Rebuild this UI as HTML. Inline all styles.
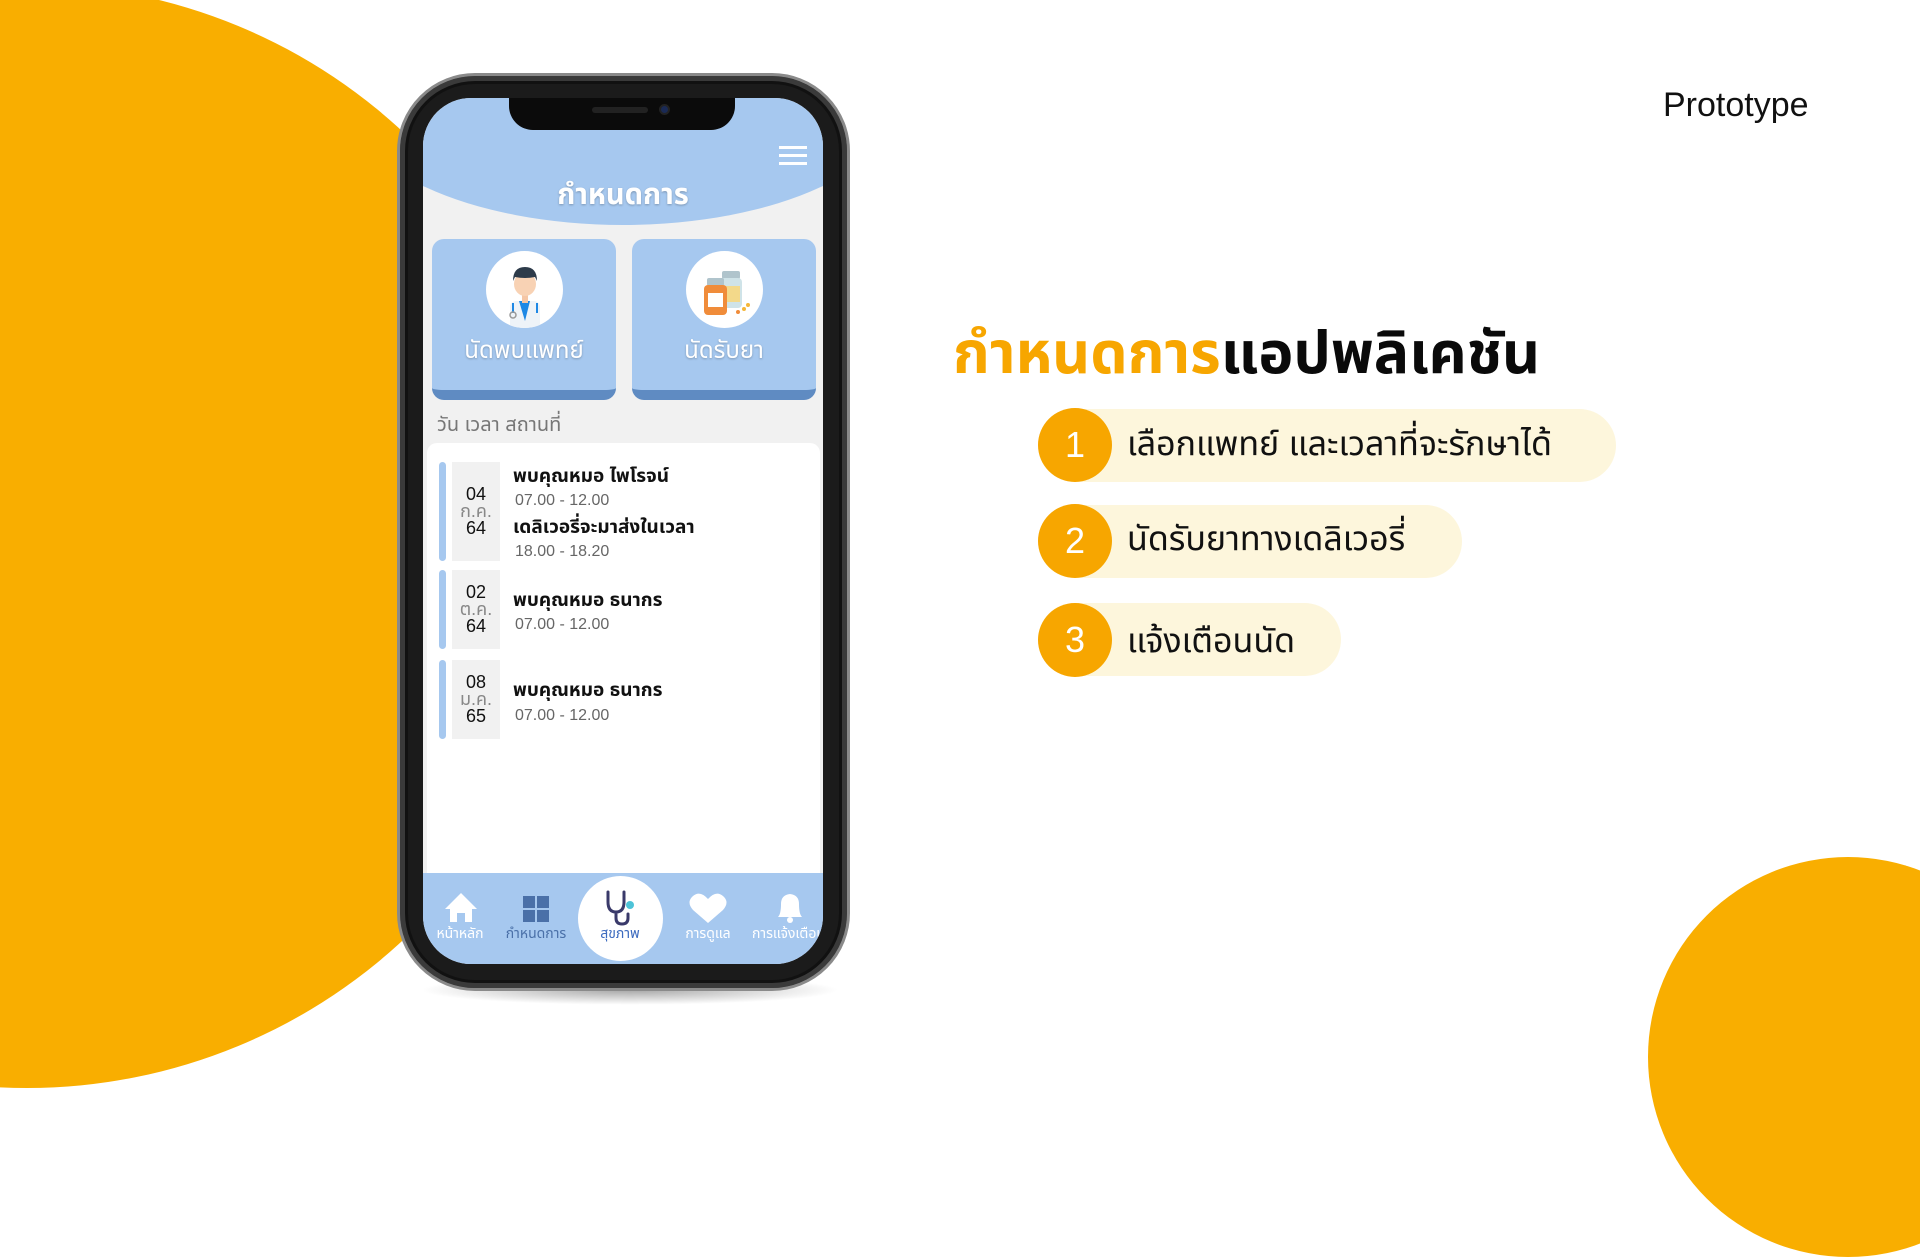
<!DOCTYPE html>
<html><head><meta charset="utf-8"><style>
*{margin:0;padding:0;box-sizing:border-box}
body{width:1920px;height:1080px;overflow:hidden;background:#fff;position:relative;font-family:"Liberation Sans","Noto Sans Thai","Loma","Garuda","Waree","Noto Sans CJK SC",sans-serif}
.a{position:absolute}
.c1{left:-525px;top:-16px;width:1104px;height:1104px;border-radius:50%;background:#f9ae00}
.c2{left:1648px;top:857px;width:400px;height:400px;border-radius:50%;background:#f9ae00}
.shadow{left:420px;top:975px;width:420px;height:30px;border-radius:50%;background:radial-gradient(ellipse at center,rgba(0,0,0,.35),rgba(0,0,0,0) 70%)}
.frame{left:397px;top:73px;width:453px;height:918px;border-radius:78px;background:#1b1b1b;border:3px solid #8a8a8a;box-shadow:inset 0 0 0 5px #3a3a3a,inset 0 0 0 8px #111}
.screen{left:423px;top:98px;width:400px;height:866px;border-radius:48px;overflow:hidden;background:#f1f1f1}
.notch{left:86px;top:0;width:226px;height:32px;background:#0b0b0b;border-radius:0 0 24px 24px}
.hdr{left:-80px;top:-300px;width:560px;height:427px;border-radius:0 0 50% 50%/0 0 130px 130px;background:#a6c8ef}
.ttl{left:0;width:400px;top:76px;text-align:center;color:#fff;font-size:29px;font-weight:bold;text-shadow:0 1px 2px rgba(0,0,0,.25)}
.ham{left:356px;top:48px;width:28px;height:3px;background:#fff;box-shadow:0 8px 0 #fff,0 16px 0 #fff}
.card{width:184px;height:161px;border-radius:12px;background:#a6c8ef;border-bottom:10px solid #5f8bc2;top:141px}
.icn{width:77px;height:77px;border-radius:50%;background:#fff;left:54px;top:12px;overflow:hidden}
.lbl{width:184px;text-align:center;top:94px;left:0;color:#fff;font-size:24px;text-shadow:0 1px 2px rgba(0,0,0,.25)}
.sub{left:14px;top:312px;color:#777;font-size:20px}
.list{left:4px;top:345px;width:393px;height:440px;background:#fff;border-radius:10px 10px 0 0}
.bar{width:7px;border-radius:4px;background:#a6c8ef;left:12px}
.date{width:48px;background:#f1f1f1;left:25px;text-align:center;font-size:18px;line-height:17px;color:#111;display:flex;flex-direction:column;justify-content:center}
.date i{font-style:normal;color:#888}
.nm{left:86px;font-size:19px;font-weight:bold;color:#111;white-space:nowrap}
.tm{left:88px;font-size:16px;color:#666}
.nav{left:0;top:775px;width:400px;height:91px;background:#a6c8ef}
.nl{font-size:14px;color:#fff;width:80px;text-align:center;top:51px;white-space:nowrap}
.pill{background:#fdf6dc;height:73px;border-radius:37px;left:1038px}
.num{width:74px;height:74px;border-radius:50%;background:#f7a600;color:#fff;font-size:36px;text-align:center;line-height:74px;left:1038px}
.pt{left:1127px;font-size:34px;color:#111;white-space:nowrap}
</style></head><body>
<div class="a c1"></div>
<div class="a c2"></div>
<div class="a" style="left:1663px;top:86px;font-size:34px;color:#111">Prototype</div>
<div class="a" style="left:953px;top:310px;font-size:59px;font-weight:bold;white-space:nowrap;color:#0a0a0a"><span style="color:#f7a600">กำหนดการ</span>แอปพลิเคชัน</div>
<div class="a pill" style="top:409px;width:578px"></div>
<div class="a num" style="top:408px">1</div>
<div class="a pt" style="top:420px">เลือกแพทย์ และเวลาที่จะรักษาได้</div>
<div class="a pill" style="top:505px;width:424px"></div>
<div class="a num" style="top:504px">2</div>
<div class="a pt" style="top:515px">นัดรับยาทางเดลิเวอรี่</div>
<div class="a pill" style="top:603px;width:303px"></div>
<div class="a num" style="top:603px">3</div>
<div class="a pt" style="top:617px">แจ้งเตือนนัด</div>

<div class="a shadow"></div>
<div class="a frame"></div>
<div class="a screen">
 <div class="a hdr"></div>
 <div class="a notch"><div class="a" style="left:83px;top:9px;width:56px;height:6px;border-radius:3px;background:#222"></div><div class="a" style="left:150px;top:6px;width:11px;height:11px;border-radius:50%;background:#1a2a55;border:2px solid #222"></div></div>
 <div class="a ham"></div>
 <div class="a ttl">กำหนดการ</div>
 <div class="a card" style="left:9px"><div class="a icn">
  <svg width="77" height="77" viewBox="0 0 77 77"><rect x="24" y="50" width="30" height="30" rx="6" fill="#eef3f8"/><path d="M33 50h11l-5 20z" fill="#1e88e5"/><rect x="36" y="42" width="6" height="10" fill="#f5c6a5"/><ellipse cx="39" cy="33" rx="11" ry="12" fill="#f8d2b4"/><path d="M27 30q0-14 12-14t12 14l-2-4q-10 2-20 0z" fill="#2d3b4a"/><path d="M27 52v10M51 52v10" stroke="#1e88e5" stroke-width="2"/><circle cx="27" cy="64" r="3" fill="none" stroke="#999" stroke-width="1.5"/></svg>
 </div><div class="a lbl">นัดพบแพทย์</div></div>
 <div class="a card" style="left:209px"><div class="a icn">
  <svg width="77" height="77" viewBox="0 0 77 77"><rect x="36" y="20" width="18" height="8" rx="2" fill="#b0c4cc"/><rect x="34" y="27" width="22" height="30" rx="4" fill="#cfe3e8"/><rect x="36" y="35" width="18" height="16" fill="#f3d98a"/><rect x="21" y="27" width="17" height="8" rx="2" fill="#b0c4cc"/><rect x="18" y="34" width="23" height="30" rx="4" fill="#f08c3a"/><rect x="22" y="42" width="15" height="14" fill="#fff"/><circle cx="58" cy="58" r="2" fill="#f5b73a"/><circle cx="52" cy="61" r="2" fill="#f08c3a"/><circle cx="62" cy="54" r="2" fill="#f5b73a"/></svg>
 </div><div class="a lbl">นัดรับยา</div></div>
 <div class="a sub">วัน เวลา สถานที่</div>
 <div class="a list">
  <div class="a bar" style="top:19px;height:99px"></div>
  <div class="a date" style="top:19px;height:99px"><span>04</span><i>ก.ค.</i><span>64</span></div>
  <div class="a nm" style="top:19px">พบคุณหมอ ไพโรจน์</div>
  <div class="a tm" style="top:49px">07.00 - 12.00</div>
  <div class="a nm" style="top:70px">เดลิเวอรี่จะมาส่งในเวลา</div>
  <div class="a tm" style="top:100px">18.00 - 18.20</div>
  <div class="a bar" style="top:127px;height:79px"></div>
  <div class="a date" style="top:127px;height:79px"><span>02</span><i>ต.ค.</i><span>64</span></div>
  <div class="a nm" style="top:143px">พบคุณหมอ ธนากร</div>
  <div class="a tm" style="top:173px">07.00 - 12.00</div>
  <div class="a bar" style="top:217px;height:79px"></div>
  <div class="a date" style="top:217px;height:79px"><span>08</span><i>ม.ค.</i><span>65</span></div>
  <div class="a nm" style="top:233px">พบคุณหมอ ธนากร</div>
  <div class="a tm" style="top:264px">07.00 - 12.00</div>
 </div>
 <div class="a nav">
  <div class="a" style="left:155px;top:3px;width:85px;height:85px;border-radius:50%;background:#fff"></div>
  <svg class="a" style="left:0;top:6px" width="400" height="50" viewBox="0 0 400 50">
   <path d="M22 30l16-16 16 16h-5v13h-7v-9h-8v9h-7V30z" fill="#fff"/>
   <g fill="#4a70a8"><rect x="100" y="17" width="12" height="12"/><rect x="114" y="17" width="12" height="12"/><rect x="100" y="31" width="12" height="12"/><rect x="114" y="31" width="12" height="12"/></g>
   <path d="M185 13v10q0 10 8 10t8-10V13M193 33v6q0 6 6 6t6-6v-4" fill="none" stroke="#3a3a6a" stroke-width="3" stroke-linecap="round"/>
   <circle cx="207" cy="26" r="4" fill="#4dc3d8"/>
   <path d="M285 44l-15-13q-7-8 0-14t15 3q8-9 15-3t0 14z" fill="#fff"/>
   <path d="M355 38q3-3 3-13q0-9 9-10q9 1 9 10q0 10 3 13z" fill="#fff"/><circle cx="367" cy="41" r="3" fill="#fff"/>
  </svg>
  <div class="a nl" style="left:-3px">หน้าหลัก</div>
  <div class="a nl" style="left:73px;color:#4a70a8">กำหนดการ</div>
  <div class="a nl" style="left:157px;color:#3d6bbf">สุขภาพ</div>
  <div class="a nl" style="left:245px">การดูแล</div>
  <div class="a nl" style="left:325px;text-align:left;padding-left:4px">การแจ้งเตือน</div>
 </div>
</div>
</body></html>
